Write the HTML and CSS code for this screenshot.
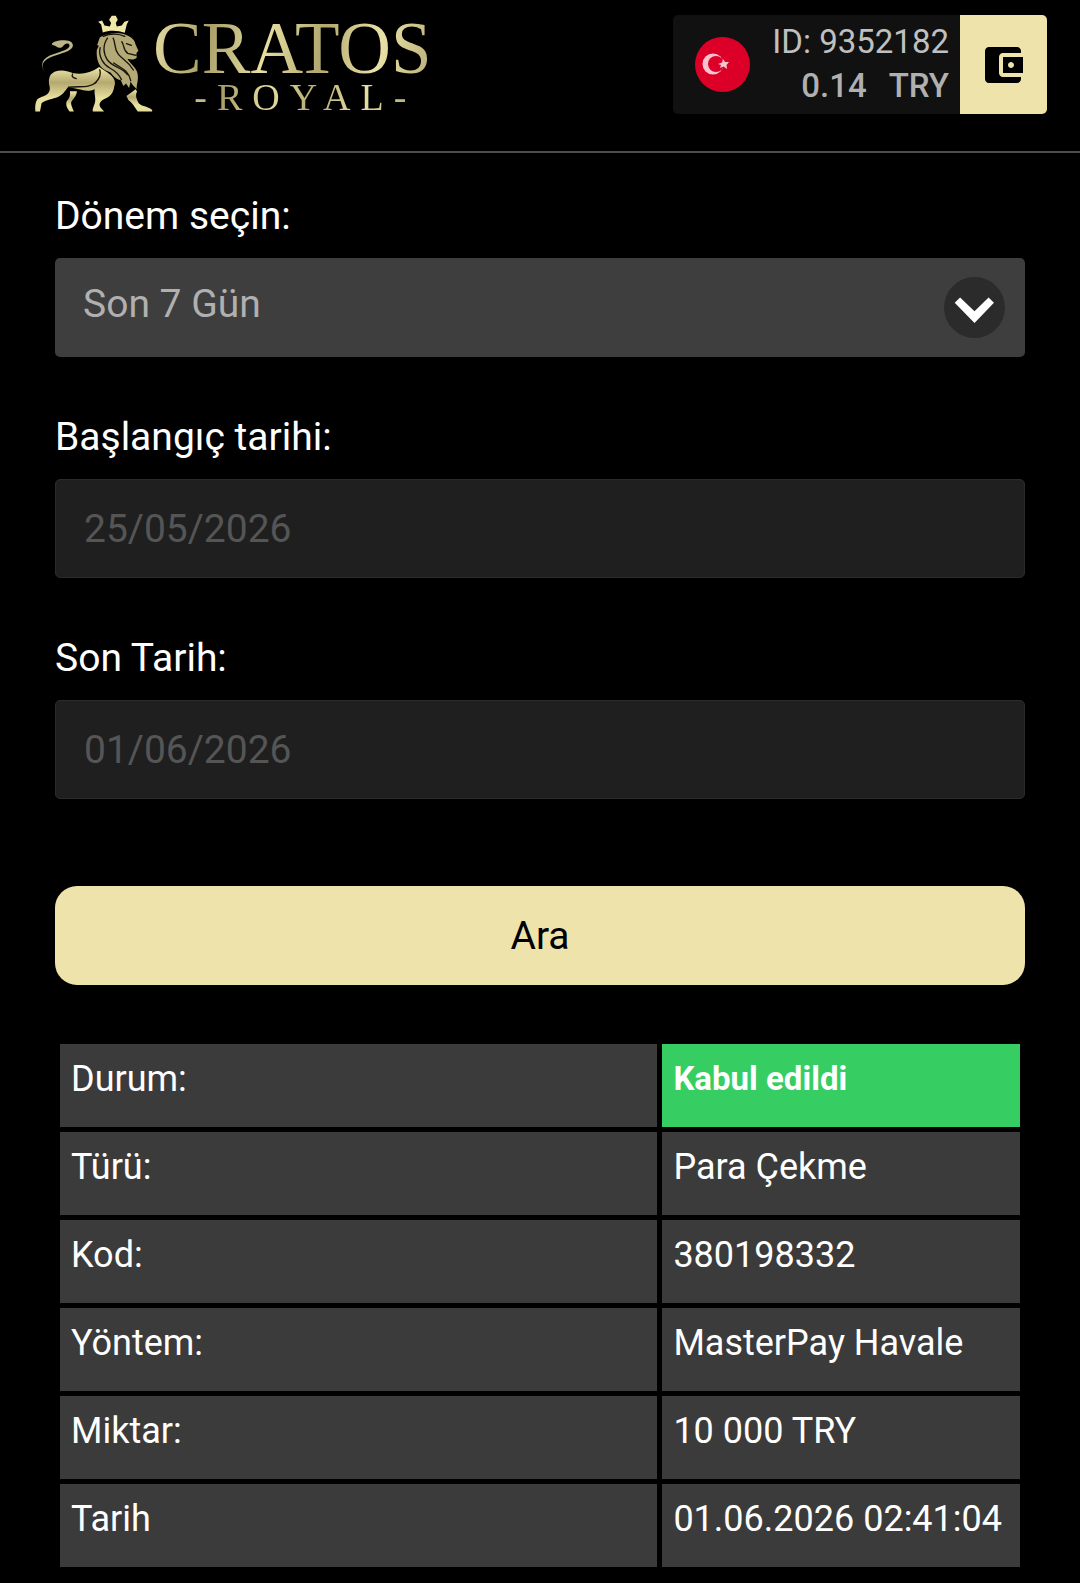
FILE: index.html
```html
<!DOCTYPE html>
<html lang="tr">
<head>
    <meta charset="UTF-8">
    <meta name="viewport" content="width=device-width, initial-scale=1.0">
    <title>Cratos Royal</title>
    <link rel="stylesheet" href="styles.css">
</head>
<body>

    <header class="header">
        <a href="#" class="logo">
            <svg class="logo-lion" viewBox="45 47 355 289" aria-hidden="true">
                <defs>
                    <linearGradient id="gold" x1="0" y1="0" x2="0" y2="1">
                        <stop offset="0" stop-color="#efe8a8"/>
                        <stop offset="0.35" stop-color="#b5a970"/>
                        <stop offset="0.7" stop-color="#e9e19d"/>
                        <stop offset="1" stop-color="#e4dc9c"/>
                    </linearGradient>
                </defs>
                <!-- tail -->
                <path d="M80 225C58 196 68 180 104 168C138 158 156 152 159 139C160 122 138 121 119 122C105 124 95 129 96 134C101 138 106 136 110 141C117 146 126 145 131 137C139 130 148 129 149 138C147 149 127 154 102 163C66 174 56 196 80 225Z" fill="#bdb587"/>
                <!-- body and legs -->
                <path fill="url(#gold)" d="M92 225C104 210 133 208 158 220C185 226 213 220 238 202L262 218C281 231 291 245 283 262C281 280 271 292 252 299C238 307 236 316 244 326L253 336H219C217 326 224 318 226 306C228 292 222 279 225 269C205 277 190 272 181 270L145 262C137 270 133 283 114 292C99 298 78 301 65 310L60 336H46C45 322 45 310 52 299C64 291 79 290 86 279C93 268 88 260 87 251C86 241 88 232 92 225Z"/>
                <path fill="url(#gold)" d="M150 275L171 275C170 289 162 296 155 305C151 313 157 323 162 336H149C140 325 137 315 140 306C149 296 152 287 150 275Z"/>
                <path fill="url(#gold)" d="M320 289L348 269L352 276C346 288 350 298 357 311C369 323 386 319 398 332L397 336H354C344 320 337 309 326 301Z"/>
                <!-- mane and head -->
                <path fill="#b3aa77" d="M240 113C257 101 294 96 318 105C337 113 345 121 347 133L356 153L350 161L351 174C344 181 333 180 323 177C331 192 345 199 352 216C359 238 350 252 351 268C342 261 336 254 333 246L328 265L319 252L311 259L303 242C290 239 280 230 273 219C262 214 253 211 247 205C235 194 229 174 231 151L237 138L232 136Z"/>
                <!-- crown -->
                <path fill="#efe8a8" d="M249 98L244 74L235 66L247 62L254 77L270 80L274 70L268 60L276 48H288L294 60L288 70L291 80L306 77L314 66L327 62L321 74L315 99C295 91 267 91 249 98Z"/>
                <!-- fur and face lines -->
                <g fill="none" stroke="#17150c" stroke-width="4" stroke-linecap="round">
                    <path d="M250 110C272 100 298 101 315 110"/>
                    <path d="M263 115C248 136 250 162 263 181C279 203 307 202 323 225"/>
                    <path d="M241 144C235 170 250 194 270 205C287 214 298 224 305 240"/>
                    <path d="M280 115C289 134 282 147 296 164C310 181 327 185 341 211"/>
                    <path d="M306 126C315 137 309 151 324 161L349 167"/>
                    <path d="M320 132L335 137"/>
                    <path d="M282 190C301 204 326 210 333 243"/>
                    <path d="M240 210C244 224 239 238 226 250"/>
                    <path d="M158 223C154 231 160 235 169 237"/>
                    <path d="M146 263C178 258 207 268 229 248"/>
                </g>
            </svg>
            <span class="logo-text">
                <span class="logo-name">CRATOS</span>
                <span class="logo-sub">-<span class="logo-royal">ROYAL</span>-</span>
            </span>
        </a>

        <div class="account">
            <div class="account-info">
                <svg class="flag" viewBox="0 0 55 55" aria-hidden="true">
                    <circle cx="27.5" cy="27.5" r="27.5" fill="#dc0029"/>
                    <circle cx="18" cy="27" r="10.5" fill="#f9c3cd"/>
                    <circle cx="21" cy="27" r="8" fill="#dc0029"/>
                    <path fill="#f9c3cd" d="M23 27L27 25.500L28 22L30 25L34 25L31.500 28L32 32L28.500 29.500L25 31L26 28Z"/>
                </svg>
                <div class="account-text">
                    <div class="account-id">ID: 9352182</div>
                    <div class="account-balance"><span>0.14</span><span>TRY</span></div>
                </div>
            </div>
            <button type="button" class="wallet" aria-label="Cüzdan">
                <svg viewBox="0 0 24 24" width="48" height="48" aria-hidden="true">
                    <path d="M21 18v1c0 1.100-.9 2-2 2H5c-1.110 0-2-.9-2-2V5c0-1.100.89-2 2-2h14c1.100 0 2 .9 2 2v1h-9c-1.110 0-2 .9-2 2v8c0 1.100.89 2 2 2h9zm-9-2h10V8H12v8zm4-2.500c-.83 0-1.500-.67-1.500-1.500s.67-1.500 1.500-1.500 1.500.67 1.500 1.500-.67 1.500-1.500 1.500z"/>
                </svg>
            </button>
        </div>
    </header>

    <main class="content">
        <form class="filter">
            <div class="field">
                <label for="period">Dönem seçin:</label>
                <div class="select-wrap">
                    <select id="period">
                        <option>Son 7 Gün</option>
                    </select>
                    <svg class="select-arrow" viewBox="0 0 182 182" aria-hidden="true">
                        <circle cx="91" cy="91" r="91" fill="#2b2b2b"/>
                        <path d="M32 77L48 61L91 102L133 61L149 77L91 137Z" fill="#fff"/>
                    </svg>
                </div>
            </div>

            <div class="field">
                <label for="start-date">Başlangıç tarihi:</label>
                <input type="text" id="start-date" value="25/05/2026" disabled>
            </div>

            <div class="field">
                <label for="end-date">Son Tarih:</label>
                <input type="text" id="end-date" value="01/06/2026" disabled>
            </div>

            <button type="button" class="search">Ara</button>
        </form>

        <table class="details">
            <tr>
                <th scope="row">Durum:</th>
                <td class="accepted">Kabul edildi</td>
            </tr>
            <tr>
                <th scope="row">Türü:</th>
                <td>Para Çekme</td>
            </tr>
            <tr>
                <th scope="row">Kod:</th>
                <td>380198332</td>
            </tr>
            <tr>
                <th scope="row">Yöntem:</th>
                <td>MasterPay Havale</td>
            </tr>
            <tr>
                <th scope="row">Miktar:</th>
                <td>10 000 TRY</td>
            </tr>
            <tr>
                <th scope="row">Tarih</th>
                <td>01.06.2026 02:41:04</td>
            </tr>
        </table>
    </main>

</body>
</html>
```
FILE: styles.css
```css
* {
    box-sizing: border-box;
}

body {
    margin: 0;
    background: #000;
    color: #fff;
    font-family: Roboto, sans-serif;
    font-size: 39px;
}

/* header */
.header {
    display: flex;
    justify-content: space-between;
    align-items: flex-start;
    padding: 15px 33px 37px 35px;
    border-bottom: 2px solid #4d4d4d;
}

.logo {
    display: flex;
    text-decoration: none;
}

.logo-lion {
    width: 118px;
    height: 97px;
}

.logo-text {
    display: flex;
    flex-direction: column;
    align-items: center;
    font-family: "Liberation Serif", serif;
}

.logo-name,
.logo-sub {
    background: linear-gradient(100deg, #e6dfa5, #a99e68 20%, #e6dfa0 40%, #b3a970 60%, #e9e2a6 80%, #b9ae78);
    -webkit-background-clip: text;
    background-clip: text;
    color: transparent;
}

.logo-name {
    font-size: 73px;
    line-height: 68px;
}

.logo-sub {
    display: flex;
    gap: 10px;
    padding-left: 16px;
    font-size: 38px;
    line-height: 28px;
}

.logo-royal {
    margin-right: -10px;
    letter-spacing: 10px;
}

.account {
    display: flex;
    border-radius: 5px;
    overflow: hidden;
}

.account-info {
    display: flex;
    align-items: center;
    gap: 22px;
    padding: 5px 11px 6px 22px;
    background: #111;
    font-size: 33px;
    line-height: 44px;
    text-align: right;
}

.flag {
    width: 55px;
    height: 55px;
}

.account-id {
    color: #c0c0c0;
}

.account-balance {
    display: flex;
    justify-content: flex-end;
    gap: 22px;
    color: #b0b0b0;
    font-weight: 500;
}

.wallet {
    display: flex;
    align-items: center;
    padding: 0 20px 0 19px;
    border: 0;
    background: #ede3ab;
    cursor: pointer;
}

/* filter form */
.content {
    padding: 40px 55px 10px;
}

.filter {
    display: flex;
    flex-direction: column;
    gap: 57px;
}

.field {
    display: flex;
    flex-direction: column;
    gap: 19px;
}

.field label {
    line-height: 46px;
}

.select-wrap {
    position: relative;
}

select,
input,
.search {
    display: block;
    width: 100%;
    height: 99px;
    font: inherit;
}

select {
    appearance: none;
    padding: 0 100px 8px 28px;
    border: 0;
    border-radius: 5px;
    background: #3e3e3e;
    color: #b0b0b0;
}

.select-arrow {
    position: absolute;
    top: 19px;
    right: 20px;
    width: 61px;
    height: 61px;
    pointer-events: none;
}

input {
    padding: 0 28px;
    border: 1px solid #2b2b2b;
    border-radius: 5px;
    background: #1f1f1f;
    color: #555;
}

.search {
    margin-top: 30px;
    border: 0;
    border-radius: 22px;
    background: #ede3ab;
    color: #000;
    cursor: pointer;
}

/* transaction details */
.details {
    width: 100%;
    margin-top: 54px;
    border-spacing: 5px;
    font-size: 36px;
    line-height: 42px;
}

.details th,
.details td {
    padding: 14px 18px 27px 11px;
    background: #3b3b3b;
    font-weight: 400;
    text-align: left;
    white-space: nowrap;
}

.details th {
    width: 100%;
}

.details .accepted {
    background: #36cd63;
    font-size: 33px;
    font-weight: 700;
}
```
